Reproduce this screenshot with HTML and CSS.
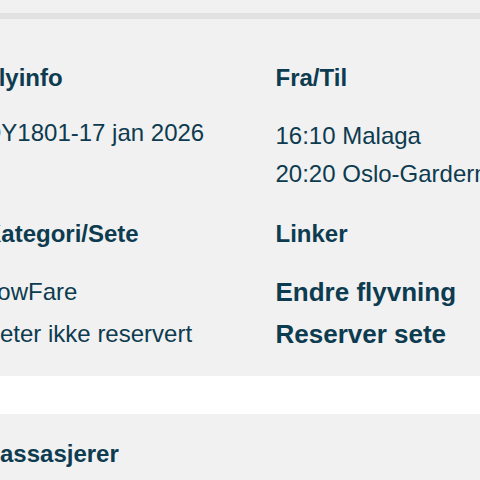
FILE: index.html
```html
<!DOCTYPE html>
<html lang="no">
<head>
<meta charset="utf-8">
<title>Flyinfo</title>
<link rel="stylesheet" href="styles.css">
</head>
<body>
<div class="top"></div>
<div class="band"></div>
<section class="panel panel-info">
  <div class="row row-first">
    <div class="cell">
      <h3 class="label">Flyinfo</h3>
      <div class="values">
        <p class="value value-raised">DY1801-17 jan 2026</p>
      </div>
    </div>
    <div class="cell">
      <h3 class="label">Fra/Til</h3>
      <div class="values">
        <p class="value">16:10 Malaga</p>
        <p class="value">20:20 Oslo-Gardermoen</p>
      </div>
    </div>
  </div>
  <div class="row row-second">
    <div class="cell">
      <h3 class="label">Kategori/Sete</h3>
      <div class="values values-wide">
        <p class="value">LowFare</p>
        <p class="value">Seter ikke reservert</p>
      </div>
    </div>
    <div class="cell">
      <h3 class="label">Linker</h3>
      <div class="values values-wide">
        <a class="link" href="#">Endre flyvning</a>
        <a class="link" href="#">Reserver sete</a>
      </div>
    </div>
  </div>
</section>
<div class="spacer"></div>
<section class="panel panel-passengers">
  <div class="row">
    <div class="cell">
      <h3 class="label">Passasjerer</h3>
    </div>
  </div>
</section>
</body>
</html>
```

FILE: styles.css
```css
html, body {
  margin: 0;
  padding: 0;
  overflow: hidden;
  background: #f1f1f1;
}
body {
  width: 480px;
  height: 480px;
  font-family: "Liberation Sans", Arial, Helvetica, sans-serif;
  color: #0d3b4f;
}
.top {
  height: 13px;
  background: #f1f1f1;
}
.band {
  height: 6px;
  background: #e1e1e1;
}
.panel {
  background: #f1f1f1;
}
.panel-info {
  padding: 40px 0 21px;
}
.spacer {
  height: 38px;
  background: #ffffff;
}
.panel-passengers {
  padding-top: 21px;
  height: 45px;
}
.row {
  display: grid;
  grid-template-columns: 291.5px 1fr;
  margin-left: -16px;
  align-items: start;
}
.row-second {
  margin-top: 22px;
}
.cell {
  min-width: 0;
  white-space: nowrap;
}
.label {
  margin: 0;
  font-size: 24px;
  font-weight: bold;
  line-height: 38px;
}
.values {
  margin-top: 20px;
  display: flex;
  flex-direction: column;
}
.values-wide {
  margin-top: 18px;
}
.value {
  margin: 0;
  font-size: 24px;
  line-height: 38px;
}
.values-wide .value {
  line-height: 42px;
}
.value-raised {
  margin-top: -3px;
}
.link {
  font-size: 26px;
  font-weight: bold;
  line-height: 42px;
  color: #0d3b4f;
  text-decoration: none;
}
```
